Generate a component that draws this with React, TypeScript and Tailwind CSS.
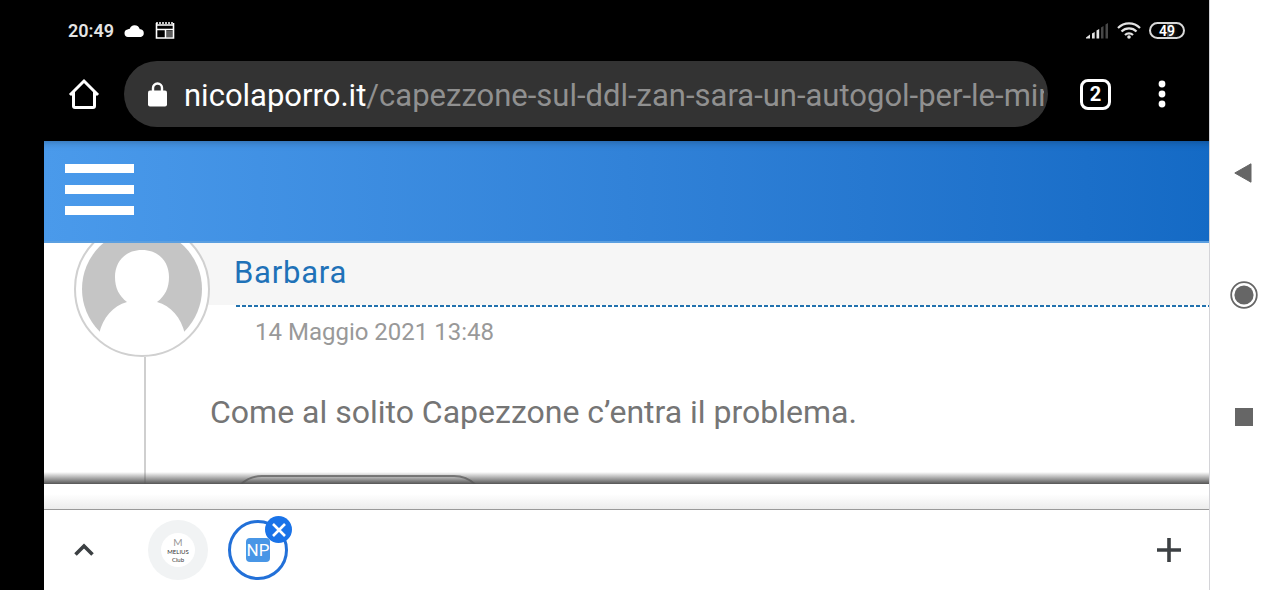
import { useState } from 'react'

const URL_PATH = '/capezzone-sul-ddl-zan-sara-un-autogol-per-le-minoranze'

function StatusBar() {
  return (
    <div className="flex h-[61px] items-center justify-between px-6 text-[#e4e4e4]">
      <div className="flex items-center gap-2.5">
        <span className="text-lg font-semibold">20:49</span>
        <svg className="h-3 w-[21px]" viewBox="0 0 21 12" fill="white">
          <path d="M4 12a3.800 3.800 0 0 1-.5-7.500C4.500 4 5 3.800 5.800 3.700 6.500 1.500 8.200.2 10.500.2c2.800 0 4.800 1.600 5.300 4.100h.9A4 4 0 0 1 17 12z" />
        </svg>
        <svg className="h-[17px] w-5" viewBox="0 0 20 17" fill="none" stroke="white">
          <path d="M1.500 1v15h17V1" strokeWidth="1.600" />
          <path d="M1 1h18" strokeWidth="1.500" strokeDasharray="2 1" />
          <path d="M1 3h18M1 7.500h18M10.500 7.500V16" strokeWidth="1.500" />
          <path d="M11 10h7M11 12h7M11 14h7" strokeWidth="1.200" stroke="#bbb" />
        </svg>
      </div>
      <div className="flex items-center gap-2">
        <svg className="h-[17px] w-[23px]" viewBox="0 0 23 17" fill="#e4e4e4">
          <path d="M0 16.500v-1l4-3v4zM6 11.500L8.700 10v6.500H6zM10.500 8.500L13.200 7v9.500h-2.700z" />
          <path d="M15 5.500L17.500 4v12.500H15zM19.500 2.500L22 1v15.500h-2.500z" fill="#484848" />
        </svg>
        <svg className="h-[17px] w-6" viewBox="0 0 24 17" fill="none" stroke="#e4e4e4" strokeWidth="2.200">
          <path d="M1 6a15.500 15.500 0 0 1 22 0M4.500 9.500a10.500 10.500 0 0 1 15 0M8 13a5.700 5.700 0 0 1 8 0" />
          <circle cx="12" cy="15" r="1.800" fill="#e4e4e4" stroke="none" />
        </svg>
        <div className="flex h-[17px] w-9 items-center justify-center rounded-full border-2 border-[#d8d8d8] bg-linear-to-r from-black from-50% via-[#444] via-50% to-black to-95% text-sm leading-none font-semibold text-white">
          49
        </div>
      </div>
    </div>
  )
}

function Toolbar() {
  const [path, setPath] = useState(URL_PATH)

  return (
    <div className="flex items-center pr-[31px] pb-3.5 pl-6">
      <button aria-label="Home" className="mr-6">
        <svg className="h-8 w-8" viewBox="0 0 32 32" fill="none" stroke="white" strokeWidth="3">
          <path d="M2 17L16 3l14 14" />
          <path d="M5.500 14v14q0 1.500 1.500 1.500h18q1.500 0 1.500-1.500V14" />
        </svg>
      </button>
      <div className="flex h-[66px] min-w-0 flex-1 items-center rounded-full bg-[#333] pr-1 pl-6 text-[31px]">
        <svg className="mr-[17px] h-[25px] w-[19px] shrink-0" viewBox="0 0 19 25" fill="white">
          <rect y="8.500" width="19" height="16" rx="2" />
          <path d="M5 9V6a4.500 4.500 0 0 1 9 0v3" fill="none" stroke="white" strokeWidth="2.400" />
        </svg>
        <label htmlFor="address" className="pt-1 text-white">nicolaporro.it</label>
        <input
          id="address"
          type="text"
          value={path}
          onChange={e => setPath(e.target.value)}
          className="min-w-0 flex-1 bg-transparent pt-1 text-[#909090] outline-none"
        />
      </div>
      <button aria-label="Tabs" className="ml-8 flex h-[31px] w-[31px] items-center justify-center rounded-lg border-3 border-white text-xl leading-none font-bold text-white">
        2
      </button>
      <button aria-label="Menu" className="ml-[35px] flex w-8 justify-center">
        <svg className="h-7 w-2" viewBox="0 0 8 28" fill="white">
          <circle cx="4" cy="4" r="3.400" />
          <circle cx="4" cy="14" r="3.400" />
          <circle cx="4" cy="24" r="3.400" />
        </svg>
      </button>
    </div>
  )
}

function Comment() {
  return (
    <article className="flex h-full pl-[30px]">
      <div className="relative z-10 -mt-[22px] flex w-[136px] shrink-0 flex-col">
        <div className="h-[136px] rounded-full border-2 border-[#d0d0d0] bg-white p-1.5">
          <svg className="h-[120px] w-[120px]" viewBox="0 0 120 120">
            <circle cx="60" cy="60" r="60" fill="#c5c5c5" />
            <path
              fill="white"
              d="M60 21c17 0 27 12 27 27 0 11-4 19-12 25 14 4 24 15 28 32A61.500 61.500 0 0 1 17 105c4-17 14-28 28-32-8-6-12-14-12-25 0-15 10-27 27-27z"
            />
          </svg>
        </div>
        <div className="ml-[70px] w-0.5 flex-1 bg-[#cfcfcf]" />
      </div>
      <div className="min-w-0 flex-1">
        <header className="-ml-5 flex h-[62px] items-center bg-[#f6f6f6] pb-0.5 pl-11">
          <a href="#barbara" className="text-[31px] tracking-wide text-[#1f72b8]">Barbara</a>
        </header>
        <hr className="ml-[26px] h-0.5 border-0 bg-[repeating-linear-gradient(90deg,#2272ae_0_4px,transparent_4px_6px)]" />
        <time className="mt-[9px] ml-[45px] block text-2xl text-[#999]">14 Maggio 2021 13:48</time>
        <p className="mt-11 text-[32px] leading-10 text-[#757575]">Come al solito Capezzone c’entra il problema.</p>
        <button aria-label="Rispondi" className="mt-[43px] ml-5 h-16 w-[256px] rounded-full border-2 border-[#888]" />
      </div>
    </article>
  )
}

function TabStrip() {
  return (
    <footer className="flex h-[81px] shrink-0 items-center border-t border-[#999] bg-white pr-7 pl-[30px]">
      <button aria-label="Expand tabs">
        <svg className="h-5 w-5" viewBox="0 0 20 20" fill="none" stroke="#3c4043" strokeWidth="3.600">
          <path d="M1.500 14.500L10 6l8.500 8.500" />
        </svg>
      </button>
      <button className="ml-[54px] flex h-[60px] w-[60px] items-center justify-center rounded-full bg-[#f1f3f4]">
        <span className="flex h-[34px] w-[34px] flex-col items-center justify-center rounded-full bg-white font-['Lato',sans-serif] text-[6px] text-[#333]">
          <span className="text-[10px] leading-3 text-[#999]">M</span>
          <span className="leading-2">MELIUS</span>
          <span className="leading-2">Club</span>
        </span>
      </button>
      <div className="relative ml-5">
        <button className="flex h-[60px] w-[60px] items-center justify-center rounded-full border-3 border-[#2270d8]">
          <span className="flex h-6 w-6 items-center justify-center rounded bg-[#4896e6] text-[17px] leading-none text-white">NP</span>
        </button>
        <button aria-label="Close tab" className="absolute -top-1 -right-1 flex h-[27px] w-[27px] items-center justify-center rounded-full bg-[#1a73e8]">
          <svg className="h-3.5 w-3.5" viewBox="0 0 14 14" stroke="white" strokeWidth="2.600">
            <path d="M1 1l12 12M13 1L1 13" />
          </svg>
        </button>
      </div>
      <button aria-label="New tab" className="ml-auto">
        <svg className="h-6 w-6" viewBox="0 0 24 24" stroke="#3c4043" strokeWidth="3.600">
          <path d="M12 0v24M0 12h24" />
        </svg>
      </button>
    </footer>
  )
}

function SystemNav() {
  const buttonClass = "flex h-[122px] w-full items-center justify-center"

  return (
    <nav className="flex w-[71px] shrink-0 flex-col justify-center border-l border-[#d4d4d8] bg-white pr-0.5">
      <button aria-label="Back" className={buttonClass}>
        <svg className="h-5 w-5" viewBox="0 0 20 20" fill="#666" stroke="#666" strokeLinejoin="round">
          <path d="M.8 10L17 .8v18.400z" />
        </svg>
      </button>
      <button aria-label="Home screen" className={buttonClass}>
        <svg className="h-7 w-7" viewBox="0 0 28 28" fill="#666">
          <circle cx="14" cy="14" r="12.800" fill="none" stroke="#666" strokeWidth="1.800" />
          <circle cx="14" cy="14" r="9.600" />
        </svg>
      </button>
      <button aria-label="Recent apps" className={buttonClass}>
        <span className="h-[18px] w-[18px] bg-[#666]" />
      </button>
    </nav>
  )
}

export default function App() {
  return (
    <div className="flex h-screen bg-black pl-11 font-['Roboto',sans-serif]">
      <div className="flex min-w-0 flex-1 flex-col">
        <StatusBar />
        <Toolbar />
        <header className="flex h-[102px] shrink-0 items-center border-b-2 border-[#5b9fe0] bg-linear-to-r from-[#4a9aeb] to-[#146ac5] pr-5 pb-1 pl-[21px] shadow-[inset_0_8px_8px_-8px_rgba(0,0,0,0.35)]">
          <button aria-label="Menu" className="flex w-[69px] flex-col gap-3">
            <span className="h-[9px] bg-white" />
            <span className="h-[9px] bg-white" />
            <span className="h-[9px] bg-white" />
          </button>
        </header>
        <main className="relative min-h-0 flex-1 overflow-hidden bg-white">
          <Comment />
          <div className="absolute inset-x-0 bottom-0 z-20 h-3 bg-linear-to-b from-transparent to-[#555]" />
        </main>
        <div className="h-[25px] shrink-0 bg-linear-to-b from-white from-40% to-[#ececec]" />
        <TabStrip />
      </div>
      <SystemNav />
    </div>
  )
}
